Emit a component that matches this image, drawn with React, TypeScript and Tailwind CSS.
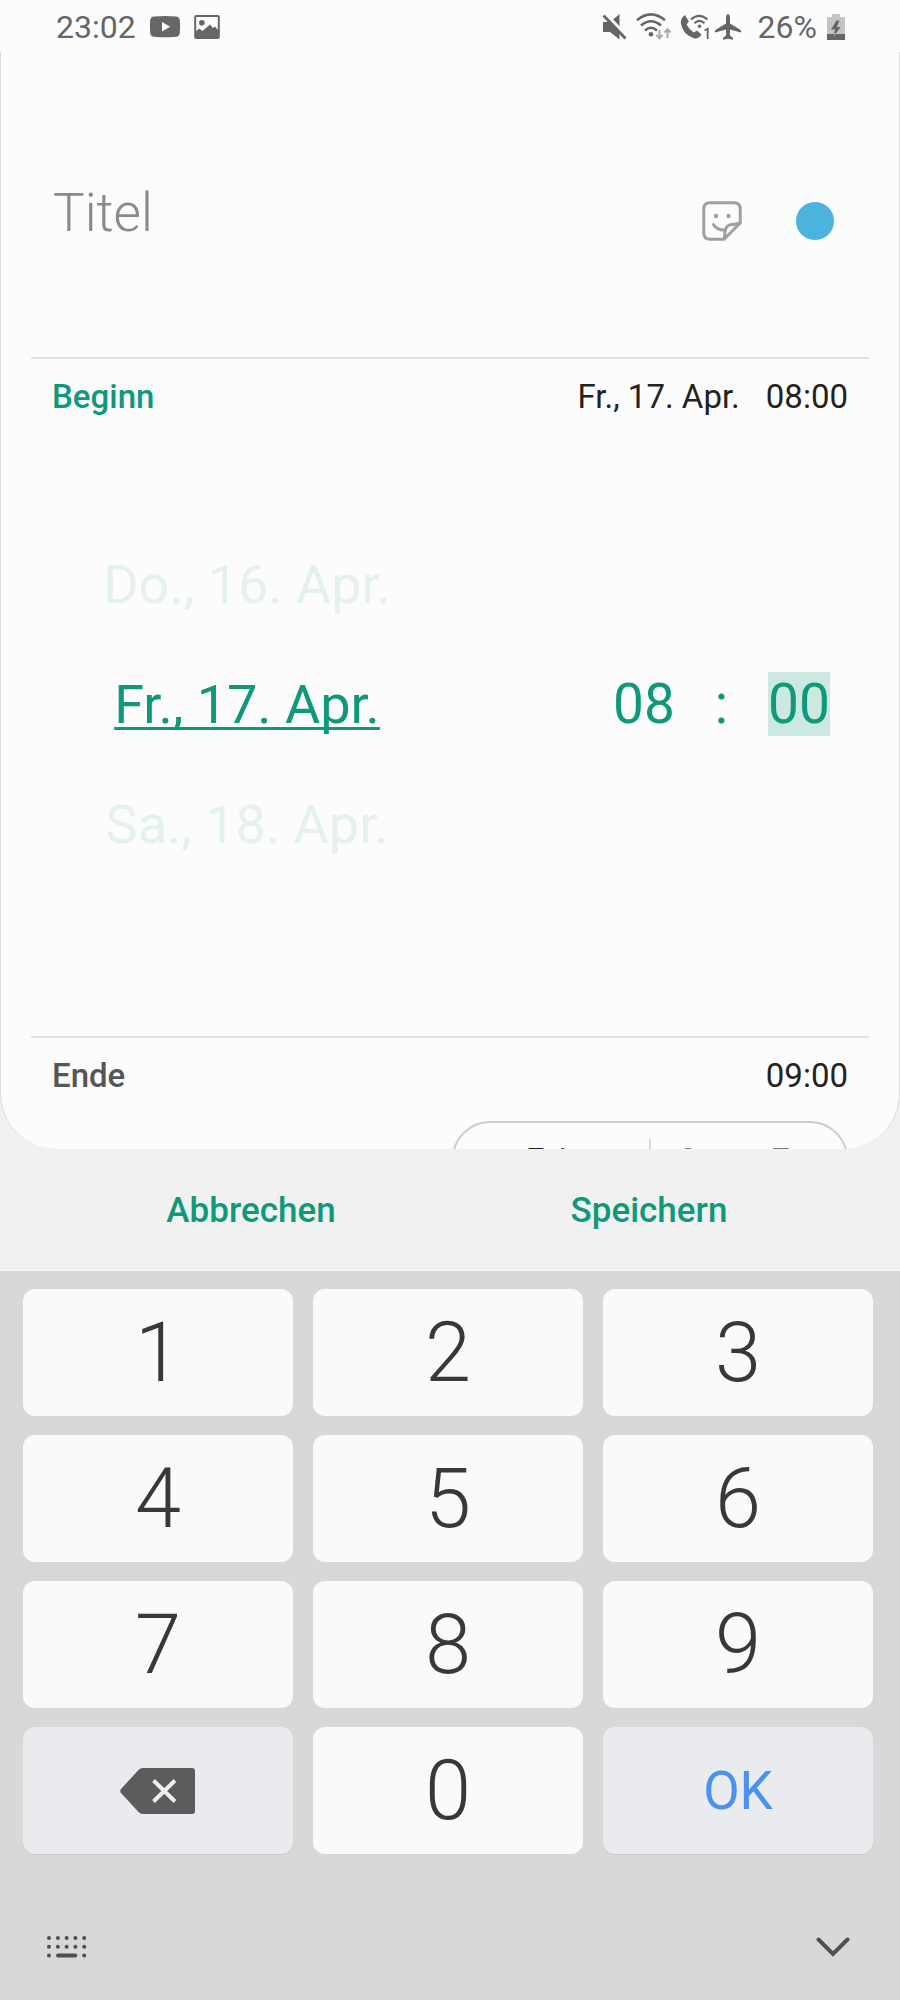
import { useState } from 'react'

const days = ['Do., 16. Apr.', 'Fr., 17. Apr.', 'Sa., 18. Apr.']
const digits = ['1', '2', '3', '4', '5', '6', '7', '8', '9']

const YoutubeIcon = () => (
    <svg width="32" height="24" viewBox="0 0 32 24" fill="#666">
        <path fillRule="evenodd" d="M5 1.4Q16 .4 27 1.4Q30.4 1.8 30.8 5Q31.4 12 30.8 18Q30.4 21.4 27 21.8Q16 22.8 5 21.8Q1.600 21.400 1.200 18Q.6 12 1.200 5Q1.600 1.800 5 1.400ZM13 7V16.400L21.200 11.700Z" />
    </svg>
)

const PictureIcon = () => (
    <svg width="26" height="26" viewBox="0 0 26 26">
        <rect x="1.200" y="2" width="23.600" height="22" rx="1" fill="none" stroke="#666" strokeWidth="2" />
        <circle cx="7.800" cy="8.800" r="2.800" fill="#666" />
        <path d="M2 17.500L5 14.500L8.500 17L16 10.500L19 14L21 12.500L24 16V24H2Z" fill="#666" />
    </svg>
)

const MuteIcon = () => (
    <svg width="26" height="28" viewBox="0 0 26 28">
        <path d="M1 9H8L17.500 1V26.500L8 19H1Z" fill="#666" />
        <path d="M3.500 .5L25 23.500" stroke="#fcfcfc" strokeWidth="3" />
        <path d="M1.500 2.500L23.500 25.500" stroke="#666" strokeWidth="2.800" />
    </svg>
)

const WifiIcon = () => (
    <svg width="36" height="28" viewBox="0 0 36 28" fill="none">
        <g stroke="#666" strokeWidth="2.600">
            <path d="M1 7.200Q15 -4.500 29 7.200" />
            <path d="M5 12.500Q15 4 25 12.500" />
            <path d="M9 17.500Q15 12 21 17.500" />
        </g>
        <circle cx="15" cy="21.300" r="2.300" fill="#666" />
        <g stroke="#aaa" strokeWidth="2">
            <path d="M23.500 17V25M20.500 22L23.500 25.200L26.500 22" />
            <path d="M31.500 25V17M28.500 19.500L31.500 16.300L34.500 19.500" />
        </g>
    </svg>
)

const WifiCallIcon = () => (
    <svg width="30" height="28" viewBox="0 0 30 28" fill="none">
        <path d="M1.200 6.500Q2.500 3.500 5 2L8.800 8.500L6.600 11.400Q9 16.500 13.800 19.400L17 17.400L21.500 21.500Q19 26 14.500 25.500Q2.500 21.500 .8 10Q.7 8 1.200 6.500Z" fill="#666" />
        <g stroke="#666" strokeWidth="2">
            <path d="M11 6.500Q19 -.8 27.500 6.500" />
            <path d="M14.500 10.200Q19.300 5.500 24.500 10.200" />
        </g>
        <circle cx="19.500" cy="13.300" r="1.700" fill="#666" />
        <path d="M24.500 17.500L27.700 15.800V26" stroke="#666" strokeWidth="1.800" />
    </svg>
)

const PlaneIcon = () => (
    <svg width="28" height="28" viewBox="0 0 28 28" fill="#666">
        <path d="M14 .8Q15.900 1.500 16 4V10.500L27 17.200V19.500L16 16.500V22.500L19 25V26.800L14 25.800L9 26.800V25L12 22.500V16.500L1 19.500V17.200L12 10.500V4Q12.100 1.500 14 .8Z" />
    </svg>
)

const BatteryIcon = () => (
    <svg width="18" height="28" viewBox="0 0 18 28">
        <path d="M5 1H13V4H18V27H0V4H5Z" fill="#c4c4c4" />
        <path d="M0 21H18V27H0Z" fill="#666" />
        <path d="M9.500 7.500L4 16.500H8L6.500 24L13.500 14H9.800L12.500 7.500Z" fill="#666" />
        <path d="M8 20.500H9L6.500 24Z" fill="#fcfcfc" />
    </svg>
)

const StickerIcon = () => (
    <svg width="40" height="40" viewBox="0 0 40 40" fill="none" stroke="#a0a0a0" strokeWidth="3" strokeLinecap="round" strokeLinejoin="round">
        <path d="M22 38.200H8Q1.800 38.200 1.800 32V8Q1.800 1.800 8 1.800H32Q38.200 1.800 38.200 8V22L22 38.200Z" />
        <path d="M22 38Q23 34 23 30Q24.500 23.500 30 23.500Q34 23.500 38 22" />
        <path d="M11.500 23.500Q15 29.500 23.500 29" />
        <circle cx="14" cy="15" r="2.200" fill="#a0a0a0" stroke="none" />
        <circle cx="26.500" cy="15" r="2.200" fill="#a0a0a0" stroke="none" />
    </svg>
)

const BackspaceIcon = () => (
    <svg width="76" height="48" viewBox="0 0 76 48">
        <path d="M23 1H72Q75 1 75 4V44Q75 47 72 47H23Q20.500 47 18.500 45L1 26Q-.5 24 1 22L18.500 3Q20.500 1 23 1Z" fill="#5c5c5c" />
        <path d="M33.500 13.500L55 34.500M55 13.500L33.500 34.500" stroke="#efeff1" strokeWidth="4" />
    </svg>
)

const KeyboardIcon = () => (
    <svg width="40" height="24" viewBox="0 0 40 24" fill="#505050">
        {[2, 10.900, 19.600, 28.400, 37.200].map((x) => (
            <g key={x}>
                <circle cx={x} cy="3" r="2" />
                <circle cx={x} cy="11.800" r="2" />
            </g>
        ))}
        <circle cx="2" cy="20.500" r="2" />
        <rect x="9" y="18.400" width="21.300" height="4.200" rx="2.100" />
        <circle cx="37.200" cy="20.500" r="2" />
    </svg>
)

const ChevronIcon = () => (
    <svg width="34" height="24" viewBox="0 0 34 24" fill="none" stroke="#505050" strokeWidth="4" strokeLinecap="round">
        <path d="M2.500 4.500L17 19L31.500 4.500" />
    </svg>
)

const StatusBar = () => (
    <div className="flex h-[52px] shrink-0 items-center justify-between pt-0.5 pl-[56px] pr-[55px] text-[32px] leading-none text-[#666]">
        <div className="flex items-center gap-[13px]">
            <span>23:02</span>
            <YoutubeIcon />
            <PictureIcon />
        </div>
        <div className="flex items-center gap-2">
            <MuteIcon />
            <WifiIcon />
            <div className="flex items-center gap-1">
                <WifiCallIcon />
                <PlaneIcon />
            </div>
            <span className="mx-2 mr-0.5">26%</span>
            <BatteryIcon />
        </div>
    </div>
)

const App = () => {
    const [title, setTitle] = useState('')
    const [hour, setHour] = useState('08')
    const [minute, setMinute] = useState('00')

    return (
        <div className="flex h-screen flex-col bg-[#fcfcfc] font-['Roboto',sans-serif] text-[#222]">
            <StatusBar />
            <div className="min-h-0 flex-1 bg-[#f1f1f1]">
                <main className="h-full overflow-hidden rounded-b-[56px] border-x border-[#ddd] bg-[#fcfcfc] px-[30px]">
                    <div className="flex items-end gap-[53px] pt-[135px] pr-[34px] pb-[116px] pl-[22px]">
                        <input
                            type="text"
                            aria-label="Titel"
                            placeholder="Titel"
                            value={title}
                            onChange={(e) => setTitle(e.target.value)}
                            className="h-[54px] min-w-0 flex-1 bg-transparent text-[53px] font-light outline-none placeholder:text-[#8a8a8a]"
                        />
                        <button aria-label="Sticker"><StickerIcon /></button>
                        <button aria-label="Farbe" className="size-10 rounded-full border border-[#fcfcfc] bg-[#4bb3dd]" />
                    </div>

                    <section className="border-t-2 border-[#e2e2e2]">
                        <div className="flex h-[76px] items-center px-[21px] text-[33px]">
                            <h2 className="flex-1 font-medium text-[#0f987a]">Beginn</h2>
                            <button>Fr., 17. Apr.</button>
                            <button className="ml-[26px]">08:00</button>
                        </div>
                        <div className="flex items-center justify-between px-[39px] pt-[89px] pb-[152px] text-[55px] text-[#0f987a]">
                            <div className="flex w-[354px] flex-col items-center text-[54px]">
                                {days.map((day, i) => (
                                    <button
                                        key={day}
                                        className={i === 1
                                            ? 'h-[120px] underline decoration-[3px] underline-offset-[4px] [text-decoration-skip-ink:none]'
                                            : 'h-[120px] text-[#e4f1ee]'}
                                    >
                                        {day}
                                    </button>
                                ))}
                            </div>
                            <div className="flex items-center gap-[39px]">
                                <input
                                    aria-label="Stunde"
                                    value={hour}
                                    onChange={(e) => setHour(e.target.value)}
                                    className="h-16 w-[62px] bg-transparent text-center outline-none"
                                />
                                <span className="w-[15px] text-center">:</span>
                                <input
                                    aria-label="Minute"
                                    value={minute}
                                    onChange={(e) => setMinute(e.target.value)}
                                    className="h-16 w-[62px] bg-[#cbe9e1] text-center outline-none"
                                />
                            </div>
                        </div>
                    </section>

                    <section className="border-t-2 border-[#e2e2e2] px-[21px]">
                        <div className="flex h-[76px] items-center justify-between text-[33px]">
                            <h2 className="font-medium text-[#555]">Ende</h2>
                            <button>09:00</button>
                        </div>
                        <div className="mt-[7px] ml-auto flex h-[76px] w-[396px] items-center rounded-full border-2 border-[#ccc] text-[28px]">
                            <button className="flex-1 font-medium">Zeit</button>
                            <div className="h-10 w-0.5 bg-[#d8d8d8]" />
                            <button className="flex-1 text-[#777]">Ganzer Tag</button>
                        </div>
                    </section>
                </main>
            </div>

            <div className="grid h-[122px] shrink-0 grid-cols-2 border-b border-[#fafafa] bg-[#f1f1f1] px-[52px] pt-1 text-[35px] font-medium text-[#0f987a]">
                <button>Abbrechen</button>
                <button>Speichern</button>
            </div>

            <div className="shrink-0 bg-[#d8d8d8] pt-[18px]">
                <div className="grid auto-rows-[127px] grid-cols-3 gap-x-5 gap-y-[19px] pl-[23px] pr-[27px] text-[83px] font-light text-[#383838]">
                    {digits.map((d) => (
                        <button key={d} className="rounded-xl bg-[#fafafa] pt-0.5">{d}</button>
                    ))}
                    <button aria-label="Löschen" className="flex items-center justify-center rounded-xl bg-[#e9ebee] shadow-[0_1px_0_#c8c9d2]">
                        <BackspaceIcon />
                    </button>
                    <button className="rounded-xl bg-[#fafafa] pt-0.5">0</button>
                    <button className="rounded-xl bg-[#e9ebee] pt-0.5 text-[53px] font-normal text-[#4a92ee] shadow-[0_1px_0_#c8c9d2]">OK</button>
                </div>
                <div className="flex h-[146px] items-center justify-between pt-10 pr-[50px] pl-[47px]">
                    <button aria-label="Tastatur wechseln"><KeyboardIcon /></button>
                    <button aria-label="Tastatur ausblenden"><ChevronIcon /></button>
                </div>
            </div>
        </div>
    )
}

export default App
